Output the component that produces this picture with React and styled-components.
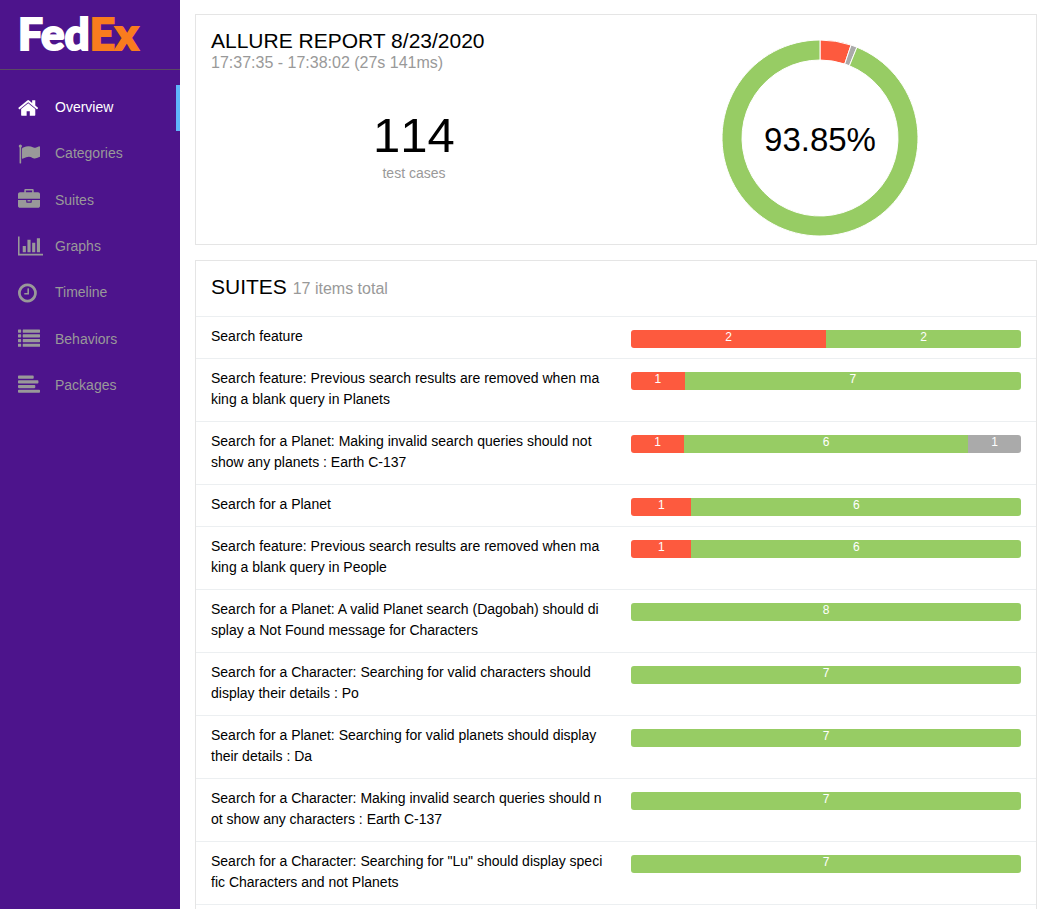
import React from "react";
import styled, { createGlobalStyle } from "styled-components";

const colors = {
  failed: "#fd5a3e",
  passed: "#97cc64",
  skipped: "#aaaaaa",
};

const GlobalStyle = createGlobalStyle`
  * { box-sizing: border-box; }
  body {
    margin: 0;
    background: #fff;
    color: #000;
    font: 14px/21px "Liberation Sans", Arial, sans-serif;
  }
`;

const Shell = styled.div`
  display: flex;
  height: 100vh;
  overflow: hidden;
`;

const Sidebar = styled.aside`
  flex: 0 0 180px;
  background: #4d148c;
`;

const Brand = styled.a`
  display: flex;
  align-items: center;
  height: 70px;
  padding: 0 18px 4px;
  border-bottom: 1px solid #5a4a62;
  color: #fff;
  font: 900 44px/66px "Lato", sans-serif;
  -webkit-text-stroke: 2px currentColor;
  text-decoration: none;
`;

const BrandAccent = styled.span`
  color: #f97c1e;
`;

const Menu = styled.ul`
  display: grid;
  grid-template-rows: repeat(7, 1fr);
  height: 324px;
  margin: 15px 0 0;
  padding: 0;
  list-style: none;
`;

const MenuLink = styled.a`
  display: flex;
  align-items: center;
  height: 100%;
  padding: 0 0 1px 18px;
  border-right: 4px solid ${(p) => (p.$active ? "#5fb5fa" : "transparent")};
  color: ${(p) => (p.$active ? "#fff" : "#999")};
  text-decoration: none;
`;

const IconBox = styled.span`
  display: flex;
  width: 37px;
`;

const Content = styled.main`
  flex: 1;
  min-width: 0;
  padding: 14px 4px 0 15px;
  overflow: hidden;
`;

const Card = styled.section`
  margin-bottom: 15px;
  border: 1px solid #e5e5e5;
`;

const Summary = styled(Card)`
  display: flex;
  height: 231px;
  padding: 0 13px 0 15px;
`;

const SummaryColumn = styled.div`
  flex: 1;
  padding-top: ${(p) => p.$top}px;
  text-align: ${(p) => p.$align || "left"};
`;

const Title = styled.h2`
  margin: 0;
  font-size: 21px;
  line-height: 24px;
  font-weight: 400;
`;

const Note = styled.span`
  color: #999;
  font-size: 16px;
  line-height: 20px;
`;

const Total = styled.div`
  margin-top: 33px;
  text-align: center;
`;

const TotalNumber = styled.div`
  font-size: 49px;
  line-height: 56px;
  font-kerning: none;
`;

const TotalLabel = styled.div`
  color: #999;
`;

const SuitesHeader = styled.header`
  padding: 14px 15px 17px;
  border-bottom: 1px solid #eceff1;
`;

const SuiteList = styled.div`
  padding-bottom: 30px;
`;

const SuiteRow = styled.a`
  display: flex;
  border-bottom: 1px solid #eceff1;
  color: inherit;
  text-decoration: none;
`;

const SuiteName = styled.div`
  flex: 1 0 50%;
  width: 50%;
  padding: 9px 13px 11px 15px;
  white-space: pre-line;
  word-break: break-all;
`;

const SuiteStatus = styled.div`
  flex: 1 0 50%;
  padding: 13px 15px 10px;
`;

const Bar = styled.div`
  display: flex;
  height: 18px;
  border-radius: 3px;
  overflow: hidden;
`;

const BarPart = styled.div`
  flex: ${(p) => p.$count} 0 auto;
  background: ${(p) => colors[p.$status]};
  color: #fff;
  font-size: 12px;
  line-height: 14px;
  text-align: center;
`;

const iconPaths = {
  home: [1664, "M1408 992v480q0 26-19 45t-45 19H960v-384H704v384H320q-26 0-45-19t-19-45V992q0-1 .5-3t.5-3l575-474 575 474q1 2 1 6zm223-69l-62 74q-8 9-21 11h-3q-13 0-21-7L832 424 140 1001q-12 8-24 7-13-2-21-11l-62-74q-8-10-7-23.5T37 878L756 279q32-26 76-26t76 26l244 204V288q0-14 9-23t23-9h192q14 0 23 9t9 23v408l219 182q10 8 11 21.5t-7 23.5z"],
  flag: [1792, "M320 256q0 72-64 110v1266q0 13-9.5 22.5T224 1664h-64q-13 0-22.5-9.5T128 1632V366q-64-38-64-110 0-53 37.5-90.5T192 128t90.5 37.5T320 256zm1472 64v763q0 25-12.5 38.5T1740 1149q-215 116-369 116-61 0-123.5-22t-108.5-48-115.5-48-142.5-22q-192 0-464 146-17 9-33 9-26 0-45-19t-19-45V474q0-32 31-55 21-14 79-43 236-120 421-120 107 0 200 29t219 88q38 19 88 19 54 0 117.5-21t110-47 88-47 54.5-21q26 0 45 19t19 45z"],
  briefcase: [1792, "M640 256h512V128H640v128zm1152 640v480q0 66-47 113t-113 47H160q-66 0-113-47T0 1376V896h672v160q0 26 19 45t45 19h320q26 0 45-19t19-45V896h672zm-768 0v128H768V896h256zm768-480v384H0V416q0-66 47-113t113-47h352V96q0-40 28-68t68-28h576q40 0 68 28t28 68v160h352q66 0 113 47t47 113z"],
  chart: [2048, "M640 896v512H384V896h256zm384-512v1024H768V384h256zm1024 1152v128H0V128h128v1408h1920zM1408 640v768h-256V640h256zm384-384v1152h-256V256h256z"],
  clock: [1536, "M896 544v448q0 14-9 23t-23 9H544q-14 0-23-9t-9-23v-64q0-14 9-23t23-9h224V544q0-14 9-23t23-9h64q14 0 23 9t9 23zm416 352q0-148-73-273t-198-198-273-73-273 73-198 198-73 273 73 273 198 198 273 73 273-73 198-198 73-273zm224 0q0 209-103 385.5T1153.5 1561 768 1664t-385.5-103T103 1281.5 0 896t103-385.5T382.5 231 768 128t385.5 103T1433 510.5 1536 896z"],
  list: [1792, [128, 512, 896, 1280].map((y) => `M32 ${y}h192q32 0 32 32v192q0 32-32 32H32q-32 0-32-32v-192q0-32 32-32zM416 ${y}h1344q32 0 32 32v192q0 32-32 32H416q-32 0-32-32v-192q0-32 32-32z`).join("")],
  align: [1792, [[128, 1280], [512, 1664], [896, 1408], [1280, 1792]].map(([y, w]) => `M64 ${y}h${w - 128}q64 0 64 64v128q0 64-64 64H64q-64 0-64-64v-128q0-64 64-64z`).join("")],
};

function Icon({ name }) {
  const [width, d] = iconPaths[name];
  return (
    <IconBox>
      <svg width={(width * 22) / 1792} height="22" viewBox={`0 0 ${width} 1792`} fill="currentColor" aria-hidden="true">
        <path d={d} />
      </svg>
    </IconBox>
  );
}

const menu = [
  ["home", "Overview"],
  ["flag", "Categories"],
  ["briefcase", "Suites"],
  ["chart", "Graphs"],
  ["clock", "Timeline"],
  ["list", "Behaviors"],
  ["align", "Packages"],
];

const suites = [
  ["Search feature", { failed: 2, passed: 2 }],
  ["Search feature: Previous search results are removed when making a blank query in Planets", { failed: 1, passed: 7 }],
  ["Search for a Planet: Making invalid search queries should not\nshow any planets : Earth C-137", { failed: 1, passed: 6, skipped: 1 }],
  ["Search for a Planet", { failed: 1, passed: 6 }],
  ["Search feature: Previous search results are removed when making a blank query in People", { failed: 1, passed: 6 }],
  ["Search for a Planet: A valid Planet search (Dagobah) should display a Not Found message for Characters", { passed: 8 }],
  ["Search for a Character: Searching for valid characters should\ndisplay their details : Po", { passed: 7 }],
  ["Search for a Planet: Searching for valid planets should display their details : Da", { passed: 7 }],
  ["Search for a Character: Making invalid search queries should not show any characters : Earth C-137", { passed: 7 }],
  ["Search for a Character: Searching for \"Lu\" should display specific Characters and not Planets", { passed: 7 }],
];

function arc(from, to, outer, inner) {
  const point = (r, a) => `${r * Math.sin(a * 2 * Math.PI)} ${-r * Math.cos(a * 2 * Math.PI)}`;
  const large = to - from > 0.5 ? 1 : 0;
  return `M${point(outer, from)}A${outer} ${outer} 0 ${large} 1 ${point(outer, to)}L${point(inner, to)}A${inner} ${inner} 0 ${large} 0 ${point(inner, from)}Z`;
}

const slices = [
  ["failed", 0, 0.0513],
  ["skipped", 0.0513, 0.0615],
  ["passed", 0.0615, 1],
];

function Donut() {
  return (
    <svg width="198" height="198" viewBox="-99 -99 198 198" role="img" aria-label="93.85% passed">
      {slices.map(([status, from, to]) => (
        <path key={status} d={arc(from, to, 98, 78)} fill={colors[status]} stroke="#fff" strokeWidth="1" />
      ))}
      <text y="13" textAnchor="middle" fontSize="33">93.85%</text>
    </svg>
  );
}

export default function App() {
  return (
    <Shell>
      <GlobalStyle />
      <Sidebar>
        <Brand href="#">
          Fed<BrandAccent>Ex</BrandAccent>
        </Brand>
        <nav>
          <Menu>
            {menu.map(([icon, label], i) => (
              <li key={label}>
                <MenuLink href={`#${label.toLowerCase()}`} $active={i === 0}>
                  <Icon name={icon} />
                  {label}
                </MenuLink>
              </li>
            ))}
          </Menu>
        </nav>
      </Sidebar>
      <Content>
        <Summary>
          <SummaryColumn $top={14}>
            <Title>ALLURE REPORT 8/23/2020</Title>
            <Note>17:37:35 - 17:38:02 (27s 141ms)</Note>
            <Total>
              <TotalNumber>114</TotalNumber>
              <TotalLabel>test cases</TotalLabel>
            </Total>
          </SummaryColumn>
          <SummaryColumn $top={24} $align="center">
            <Donut />
          </SummaryColumn>
        </Summary>
        <Card>
          <SuitesHeader>
            <Title>
              SUITES <Note>17 items total</Note>
            </Title>
          </SuitesHeader>
          <SuiteList>
            {suites.map(([name, counts]) => (
              <SuiteRow key={name} href="#suites">
                <SuiteName>{name}</SuiteName>
                <SuiteStatus>
                  <Bar>
                    {Object.entries(counts).map(([status, count]) => (
                      <BarPart key={status} $status={status} $count={count}>
                        {count}
                      </BarPart>
                    ))}
                  </Bar>
                </SuiteStatus>
              </SuiteRow>
            ))}
          </SuiteList>
        </Card>
      </Content>
    </Shell>
  );
}
